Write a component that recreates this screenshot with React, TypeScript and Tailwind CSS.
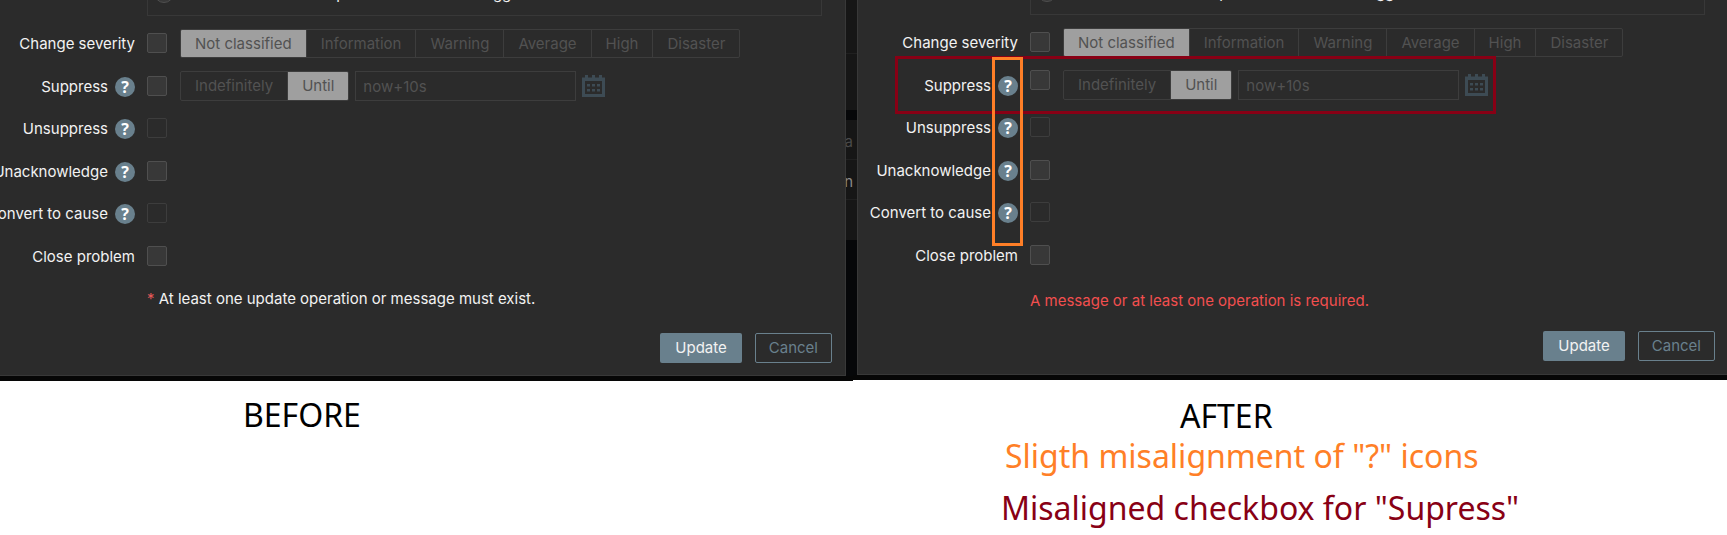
import type { ReactNode } from 'react'
import clsx from 'clsx'

const severities = ['Not classified', 'Information', 'Warning', 'Average', 'High', 'Disaster']

function HelpIcon() {
  return (
    <button
      type="button"
      aria-label="Help"
      className="flex size-5 shrink-0 items-center justify-center rounded-full bg-[#69808d] font-['Open_Sans',sans-serif] text-base leading-5 font-bold text-white"
    >
      ?
    </button>
  )
}

function CalendarIcon() {
  return (
    <svg width="23" height="22" viewBox="0 0 23 22" fill="#3d4b54" aria-hidden="true">
      <path
        fillRule="evenodd"
        d="M0 2.5h3V0h3v2.5h4V0h3v2.5h4V0h3v2.5h3V22H0zM3 6v13h17V6z"
      />
      <path d="M5 9h3v2.5H5zM10 9h3v2.5h-3zM15 9h3v2.5h-3zM5 14h3v2.5H5zM10 14h3v2.5h-3zM15 14h3v2.5h-3z" />
    </svg>
  )
}

function Segmented({ name, label, options, selected, className }: {
  name: string
  label: string
  options: string[]
  selected: string
  className: string
}) {
  return (
    <div
      role="radiogroup"
      aria-label={label}
      className={clsx('relative flex shrink-0 divide-x divide-[#3d3d3d] overflow-hidden rounded-xs border border-[#3d3d3d]', className)}
    >
      {options.map((option) => (
        <label
          key={option}
          className="flex items-center px-3.5 pt-px whitespace-nowrap text-[#525252] has-checked:bg-[#9f9f9f]"
        >
          <input type="radio" name={name} defaultChecked={option === selected} disabled className="sr-only" />
          {option}
        </label>
      ))}
    </div>
  )
}

function Row({ id, label, help, disabled, topAligned, children }: {
  id: string
  label: string
  help?: boolean
  disabled?: boolean
  topAligned?: boolean
  children?: ReactNode
}) {
  return (
    <div className="col-span-2 grid grid-cols-subgrid items-center">
      <div className="flex min-w-0 items-center justify-end gap-[7px] pt-0.5 whitespace-nowrap">
        <label htmlFor={id}>{label}</label>
        {help && <HelpIcon />}
      </div>
      <div className={clsx('flex', topAligned ? 'items-start' : 'items-center')}>
        <input
          id={id}
          type="checkbox"
          disabled={disabled}
          className="size-5 shrink-0 appearance-none rounded-xs border border-[#4f4f4f] bg-[#383838] disabled:border-[#3d3d3d] disabled:bg-transparent"
        />
        {children && <div className="flex items-center pl-[13px]">{children}</div>}
      </div>
    </div>
  )
}

function UpdateForm({ id, misaligned, message, className, columns, scopeClass, footerClass }: {
  id: string
  misaligned?: boolean
  message: ReactNode
  className: string
  columns: string
  scopeClass: string
  footerClass: string
}) {
  return (
    <form className={clsx('flex min-w-0 grow flex-col overflow-hidden border-b border-[#383838] bg-[#2b2b2b]', className)}>
      {/* Tail of the scope list, scrolled out of view */}
      <div className={clsx('grid shrink-0 gap-x-3', columns, scopeClass)}>
        <div className="col-start-2 flex min-w-0 items-end gap-1 overflow-hidden border-x border-b border-[#383838] px-1.5 pb-3">
          <input
            id={`${id}-scope`}
            type="radio"
            className="size-5 shrink-0 appearance-none rounded-full border border-[#4f4f4f] bg-[#383838]"
          />
          <label htmlFor={`${id}-scope`} className="-mb-px whitespace-nowrap">
            Selected and all other problems of related triggers
          </label>
        </div>
      </div>

      <div className={clsx('mt-1.5 grid h-[255px] shrink-0 auto-rows-fr gap-x-3', columns)}>
        <Row id={`${id}-severity`} label="Change severity">
          <Segmented
            name={`${id}-severity-level`}
            label="Severity"
            options={severities}
            selected="Not classified"
            className="h-[29px]"
          />
        </Row>
        <Row id={`${id}-suppress`} label="Suppress" help topAligned={misaligned}>
          <Segmented
            name={`${id}-suppress-mode`}
            label="Suppress mode"
            options={['Indefinitely', 'Until']}
            selected="Until"
            className="h-[30px]"
          />
          <input
            type="text"
            aria-label="Suppress until"
            defaultValue="now+10s"
            disabled
            className="ml-1.5 h-[30px] w-[221px] border border-[#3d3d3d] bg-transparent px-[7px] pt-px text-[#525252]"
          />
          <button type="button" aria-label="Pick a date" disabled className="ml-1.5">
            <CalendarIcon />
          </button>
        </Row>
        <Row id={`${id}-unsuppress`} label="Unsuppress" help disabled />
        <Row id={`${id}-unack`} label="Unacknowledge" help />
        <Row id={`${id}-cause`} label="Convert to cause" help disabled />
        <Row id={`${id}-close`} label="Close problem" />
      </div>

      {message}

      <div className={clsx('mt-auto flex justify-end gap-[13px]', footerClass)}>
        <button type="submit" className="h-[30px] rounded-xs bg-[#69808d] px-[15px] text-[#f2f2f2]">
          Update
        </button>
        <button type="button" className="h-[30px] rounded-xs border border-[#69808d] px-[13px] text-[#69808d]">
          Cancel
        </button>
      </div>
    </form>
  )
}

// Sliver of the dimmed page that shows beside a dialog
function Backdrop({ children, className }: { children?: ReactNode; className: string }) {
  return (
    <div className={clsx('flex shrink-0 flex-col overflow-hidden bg-[#060709]', className)}>
      <div className="h-[54px] border-b border-[#202020] bg-[#161616]" />
      <div className="h-14 bg-[#161616]" />
      <div className="mt-2.5 flex h-[120px] flex-col bg-[#161616]">{children}</div>
    </div>
  )
}

export default function App() {
  return (
    <main className="min-h-screen bg-white">
      <div className="grid grid-cols-[853fr_874fr] items-start font-[Inter,sans-serif] text-[15px] leading-5 text-[#f2f2f2]">
        <section aria-label="Before" className="flex h-[381px] min-w-0 bg-[#060606] pb-[5px]">
          <UpdateForm
            id="before"
            className="border-r"
            columns="grid-cols-[135px_minmax(0,1fr)]"
            scopeClass="h-4 pr-[23px]"
            footerClass="pr-[13px] pb-3"
            message={
              <p className="mt-3 pl-[147px]">
                <span className="text-[#e45959]">*</span> At least one update operation or message must exist.
              </p>
            }
          />
          <Backdrop className="w-[7px]">
            <div className="flex h-10 items-center justify-end border-b border-[#202020] pt-1 text-[#4a4a4a]">ra</div>
            <div className="flex h-10 items-center justify-end border-b border-[#202020] pt-1 text-[#8a8a8a]">n</div>
          </Backdrop>
        </section>

        <section aria-label="After" className="relative flex h-[380px] min-w-0 bg-[#060606] pb-[5px]">
          <Backdrop className="w-1">
            <div className="h-10 border-b border-[#202020]" />
            <div className="h-10 border-b border-[#202020]" />
          </Backdrop>
          <UpdateForm
            id="after"
            misaligned
            className="border-l"
            columns="grid-cols-[160px_minmax(0,1fr)]"
            scopeClass="h-[15px] pr-[22px]"
            footerClass="pr-3 pb-[13px]"
            message={<p className="mt-[15px] pl-[172px] text-[#f24f4f]">A message or at least one operation is required.</p>}
          />
          <div className="absolute top-14 left-[42px] h-[58px] w-[601px] border-3 border-[#880015]" />
          <div className="absolute top-[57px] left-[139px] h-[189px] w-[31px] border-3 border-[#ff7f27]" />
        </section>
      </div>

      <div className="grid grid-cols-[853fr_874fr] font-['Noto_Sans',sans-serif] text-[32px] leading-10 whitespace-nowrap">
        <h2 className="pt-3.5 pl-[243px] text-black">BEFORE</h2>
        <div className="pt-[15px] pl-[148px]">
          <h2 className="pl-[179px] text-black">AFTER</h2>
          <p className="pl-1 text-[#ff7f27]">Sligth misalignment of "?" icons</p>
          <p className="mt-3 text-[#880015]">Misaligned checkbox for "Supress"</p>
        </div>
      </div>
    </main>
  )
}
